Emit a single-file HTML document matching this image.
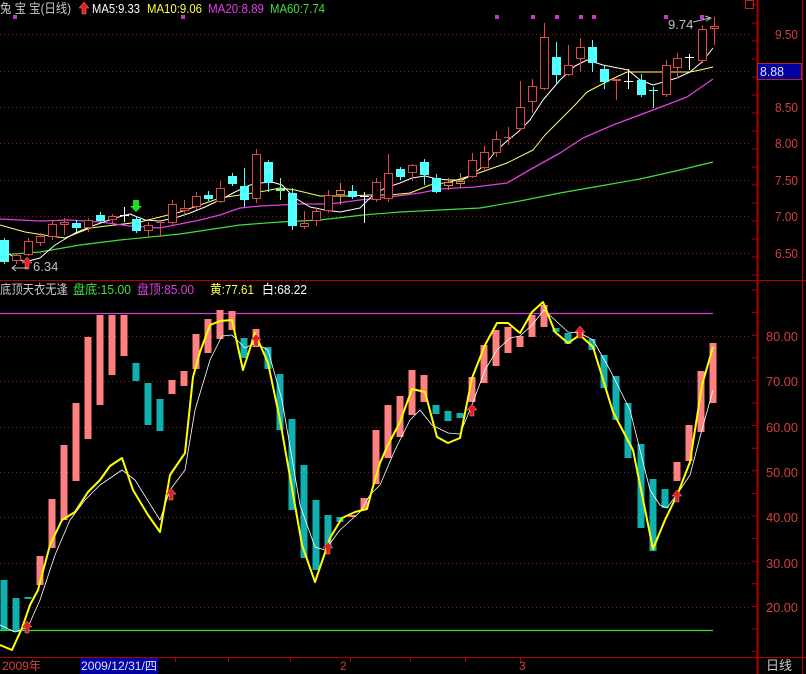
<!DOCTYPE html>
<html><head><meta charset="utf-8"><style>
html,body{margin:0;padding:0;background:#000;}
body{width:806px;height:674px;overflow:hidden;position:relative;font-family:"Liberation Sans","Noto Sans CJK SC",sans-serif;}
svg{position:absolute;left:0;top:0;}
svg text{font-family:"Liberation Sans","Noto Sans CJK SC",sans-serif;font-size:12px;}
</style></head><body>
<svg id="s" width="806" height="674" xmlns="http://www.w3.org/2000/svg"></svg>
<script>
var s=document.getElementById('s');var h='';
function L(x1,y1,x2,y2,c,w,d){h+='<line x1="'+x1+'" y1="'+y1+'" x2="'+x2+'" y2="'+y2+'" stroke="'+c+'" stroke-width="'+(w||1)+'"'+(d?' stroke-dasharray="'+d+'"':'')+'/>';}
function R(x,y,w,hh,f,st){h+='<rect x="'+x+'" y="'+y+'" width="'+w+'" height="'+hh+'" fill="'+f+'"'+(st?' stroke="'+st+'"':'')+'/>';}
function T(x,y,t,c,sz,anc,tl){h+='<text x="'+x+'" y="'+y+'" fill="'+c+'"'+(sz?' style="font-size:'+sz+'px"':'')+(anc?' text-anchor="'+anc+'"':'')+(tl?' textLength="'+tl+'" lengthAdjust="spacingAndGlyphs"':'')+'>'+t+'</text>';}
function P(pts,c,w){h+='<polyline fill="none" stroke="'+c+'" stroke-width="'+(w||1)+'" stroke-linejoin="round" points="'+pts.map(function(p){return p.join(',')}).join(' ')+'"/>';}
[34,71,107,143,180,216,253].forEach(function(y){L(0,y+.5,752,y+.5,'#a01010',1,'1 3');});
[336,381,427,472,517,563,607].forEach(function(y){L(0,y+.5,752,y+.5,'#a01010',1,'1 3');});
L(0,280.5,806,280.5,'#b00000',1);L(757.5,0,757.5,674,'#b00000',2);L(802.5,0,802.5,674,'#b00000',1);
L(0,657.5,806,657.5,'#b00000',1);
for(var y=5;y<280;y+=18)L(752,y,757,y,'#b00000');
for(var y=290;y<657;y+=22.6)L(752,y,757,y,'#b00000');
[100,175,228,290,350,410,465,520].forEach(function(x){L(x+.5,657,x+.5,662,'#b00000');});
P([[0,225],[25,232],[50,236],[65,238],[90,228],[115,225],[140,222],[160,217],[180,212],[200,205],[220,198],[240,195],[265,191],[280,188],[295,190],[320,196],[345,196],[370,195],[390,195],[410,193],[430,185],[450,182],[473,175],[507,163],[533,150],[545,135],[560,120],[575,105],[587,92],[610,80],[627,72],[660,72],[690,72],[700,70],[713,67]],'#ffff60');
P([[0,219],[40,221],[70,220],[100,222],[130,226],[160,228],[180,224],[200,220],[220,215],[240,208],[260,206],[280,205],[300,204],[330,204],[360,200],[390,197],[420,193],[440,189],[475,187],[507,183],[533,168],[560,153],[583,138],[613,125],[653,110],[687,97],[713,79]],'#e040e0',1.3);
P([[0,255],[40,252],[80,245],[120,240],[180,234],[240,225],[280,222],[320,220],[363,215],[400,212],[440,210],[480,208],[520,201],[560,193],[600,186],[640,179],[680,170],[713,162]],'#40e040',1.2);
P([[0,247],[12,256],[25,262],[40,258],[55,245],[75,233],[95,225],[115,218],[130,214],[145,220],[160,221],[175,218],[190,213],[205,207],[220,200],[235,192],[250,185],[260,183],[272,182],[282,185],[295,198],[310,207],[325,210],[340,212],[350,210],[360,208],[372,196],[385,188],[400,183],[412,178],[425,176],[437,179],[450,180],[462,180],[472,175],[485,165],[495,152],[508,140],[518,132],[530,120],[543,100],[560,80],[575,66],[587,60],[603,65],[628,70],[640,80],[653,85],[677,78],[690,72],[702,62],[713,48]],'#ffffff');
var C=[[4,240,262,238,264,'c'],[16,255,261,253,264,'r'],[28,241,255,238,256,'r'],[40,236,243,233,246,'r'],[52,224,237,220,240,'r'],[64,222,225,218,235,'r'],[76,223,228,220,232,'c'],[88,220,228,218,232,'r'],[100,215,221,212,223,'c'],[112,216,220,214,223,'r'],[124,215,215,207,222,'w'],[136,219,231,216,233,'c'],[148,225,231,222,237,'r'],[160,222,223,221,237,'r'],[172,204,223,200,225,'r'],[184,208,211,200,216,'r'],[196,196,207,192,210,'r'],[208,195,199,191,201,'c'],[220,188,202,181,203,'r'],[232,176,184,173,186,'c'],[244,186,200,168,207,'c'],[256,154,199,149,203,'r'],[268,162,183,160,192,'c'],[280,189,191,178,200,'g'],[292,193,226,188,230,'c'],[304,223,227,211,229,'r'],[316,211,221,207,226,'r'],[328,195,211,190,213,'r'],[340,190,195,183,205,'o'],[352,191,197,185,199,'c'],[364,196,196,192,223,'w'],[376,182,200,178,202,'r'],[388,173,199,154,202,'r'],[400,169,177,167,180,'c'],[412,165,173,164,181,'r'],[424,162,175,159,185,'c'],[436,178,192,174,193,'c'],[448,182,186,178,190,'o'],[460,181,184,173,188,'o'],[472,160,177,153,178,'r'],[484,152,168,146,170,'r'],[496,139,153,131,157,'r'],[508,137,137,127,145,'r'],[520,107,129,81,130,'r'],[532,86,102,79,113,'r'],[544,37,89,23,90,'r'],[556,57,75,42,85,'c'],[568,65,75,45,76,'r'],[580,47,59,38,72,'r'],[592,47,63,40,72,'c'],[604,69,82,66,89,'c'],[616,79,81,79,100,'r'],[628,81,81,69,89,'w'],[641,80,95,74,97,'c'],[653,90,90,87,108,'c'],[666,65,95,60,97,'r'],[677,58,68,53,78,'r'],[689,57,57,54,70,'w'],[702,29,61,25,63,'r'],[714,26,29,17,45,'r']];
C.forEach(function(c){var x=c[0],col={r:'#e04848',c:'#54ffff',w:'#ffffff',g:'#80ffa0',o:'#e08030'}[c[5]];
L(x+.5,c[3],x+.5,c[4],col);
if(c[2]-c[1]<2){L(x-4,c[1]+.5,x+5,c[1]+.5,col,c[5]=='o'?2:1);}
else if(c[5]=='c'){R(x-4,c[1],9,c[2]-c[1],col);}
else{R(x-3.5,c[1]+.5,8,c[2]-c[1]-1,'#000',col);}
});
[15,183,497,533,557,581,594,666,702].forEach(function(x){R(x-2,15,4,4,'#d030d0');});
function UA(x,y,c){h+='<path d="M'+x+' '+y+' l5 6 h-3 v6 h-4 v-6 h-3 z" fill="'+c+'" stroke="#ff9090" stroke-width=".5"/>';}
UA(27,257,'#e02020');UA(84,2,'#e02020');
h+='<path d="M136 212 l-6 -6 h3 v-6 h6 v6 h3 z" fill="#20e020"/>';
T(33,271,'6.34','#c0c0c0',13);P([[28,268],[12,268]],'#c0c0c0');P([[16,265],[12,268],[16,271]],'#c0c0c0');
T(668,29,'9.74','#c0c0c0',13);P([[693,22],[710,18]],'#c0c0c0');P([[705,16],[711,18],[706,21]],'#c0c0c0');
R(745.5,0.5,8,8,'none','#c02020');
L(0,313.5,713,313.5,'#d040d0',1.2);L(0,630.5,713,630.5,'#30e030',1.2);
var B=[[4,580,630,'c'],[16,598,632,'c'],[28,597,599,'c'],[40,556,585,'p'],[52,499,548,'p'],[64,445,520,'p'],[76,403,481,'p'],[88,337,439,'p'],[100,315,405,'p'],[112,315,375,'p'],[124,315,356,'p'],[136,363,381,'c'],[148,383,425,'c'],[160,399,431,'c'],[172,380,394,'p'],[184,371,386,'p'],[196,334,369,'p'],[208,319,353,'p'],[220,310,339,'p'],[232,311,330,'p'],[244,338,358,'c'],[256,329,347,'p'],[268,347,369,'c'],[280,374,430,'c'],[292,419,510,'c'],[304,465,558,'c'],[316,500,570,'c'],[328,515,548,'c'],[340,517,522,'c'],[352,515,517,'p'],[364,498,510,'p'],[376,430,484,'p'],[388,405,458,'p'],[400,396,437,'p'],[412,370,415,'p'],[424,375,402,'p'],[436,405,414,'c'],[448,411,421,'c'],[460,413,418,'c'],[472,377,402,'p'],[484,345,383,'p'],[496,330,366,'p'],[508,327,353,'p'],[520,336,347,'p'],[532,315,337,'p'],[544,305,327,'p'],[556,328,332,'c'],[568,333,344,'c'],[580,330,336,'p'],[592,339,350,'c'],[604,355,388,'c'],[616,376,420,'c'],[628,403,458,'c'],[641,444,528,'c'],[653,479,551,'c'],[665,489,508,'c'],[677,462,481,'p'],[689,425,461,'p'],[701,371,432,'p'],[713,343,403,'p']];
B.forEach(function(b){R(b[0]-3.5,b[1],7,b[2]-b[1],b[3]=='p'?'#ff8080':'#10b0b0');});
P([[0,625],[15,632],[28,627],[40,600],[55,555],[70,520],[85,500],[100,485],[122,470],[135,480],[160,520],[170,490],[185,470],[195,410],[210,360],[222,336],[232,335],[245,348],[255,343],[268,350],[282,400],[300,505],[315,547],[325,550],[340,530],[360,512],[370,495],[380,485],[395,450],[410,420],[420,410],[432,425],[448,433],[460,434],[472,405],[485,370],[497,350],[510,338],[520,336],[532,325],[544,310],[555,320],[568,332],[580,333],[593,340],[610,370],[630,410],[650,490],[660,505],[667,508],[680,490],[690,475],[700,437],[713,390]],'#ffffff',0.8);
P([[0,645],[12,650],[22,628],[30,605],[38,590],[50,545],[62,520],[75,512],[88,492],[100,480],[110,466],[122,458],[133,490],[148,515],[160,532],[170,475],[185,453],[193,377],[200,352],[210,325],[220,321],[232,320],[243,370],[255,333],[268,363],[280,420],[290,477],[302,545],[315,582],[330,538],[342,518],[355,512],[367,509],[372,490],[380,463],[387,447],[400,422],[412,389],[425,392],[437,437],[448,443],[460,438],[472,378],[485,345],[497,323],[508,323],[520,333],[532,312],[543,302],[555,332],[568,343],[580,335],[593,347],[613,412],[633,450],[653,549],[665,520],[678,493],[690,462],[702,385],[713,347]],'#ffff00',2);
[[27,621],[171,488],[256,334],[328,542],[472,404],[580,326],[677,490]].forEach(function(a){UA(a[0],a[1],'#e02020');});
[['9.50',34],['8.50',107],['8.00',143],['7.50',180],['7.00',216],['6.50',253]].forEach(function(l){T(775,l[1]+5,l[0],'#d04040',13,null,23);});
[['80.00',336],['70.00',381],['60.00',427],['50.00',472],['40.00',517],['30.00',563],['20.00',607]].forEach(function(l){T(766,l[1]+5,l[0],'#d04040',13,null,32);});
R(757.5,63.5,44,16,'#0000a0','#c02020');T(760,76,'8.88','#e0e0ff',13,null,24);
T(0,13,'兔 宝 宝(日线)','#c8c8c8',13,null,71);T(92,13,'MA5:9.33','#ffffff',13,null,48);T(147,13,'MA10:9.06','#ffff40',13,null,55);T(208,13,'MA20:8.89','#e040e0',13,null,56);T(270,13,'MA60:7.74','#40e040',13,null,55);
T(0,294,'底顶天衣无逢','#c8c8c8',13,null,68);T(73,294,'盘底:15.00','#40e040',13,null,58);T(137,294,'盘顶:85.00','#e040e0',13,null,57);T(210,294,'黄:77.61','#ffff40',13,null,44);T(262,294,'白:68.22','#ffffff',13,null,45);
T(2,670,'2009年','#d04040',12,null,39);R(80,658,78,16,'#0000a0');T(81,670,'2009/12/31/四','#e0e0ff',12,null,76);
T(340,670,'2','#d04040',12);T(519,670,'3','#d04040',12);T(766,670,'日线','#c8c8c8',13);
s.innerHTML=h;
</script>
</body></html>
